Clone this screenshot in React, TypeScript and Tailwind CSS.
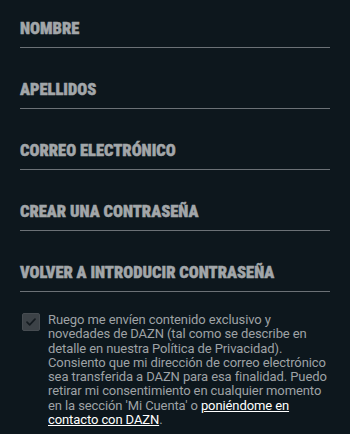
import React from "react";

const fields = [
  "NOMBRE",
  "APELLIDOS",
  "CORREO ELECTRÓNICO",
  "CREAR UNA CONTRASEÑA",
  "VOLVER A INTRODUCIR CONTRASEÑA",
];

function Field({ label, first }: { label: string; first?: boolean }) {
  return (
    <div
      className={
        "flex h-[48px] items-end border-b border-[#6b7176] pb-[10px] " +
        (first ? "" : "mt-[13px]")
      }
    >
      <span className="text-[16.5px] font-black leading-[16px] text-[#a2a6a9] [-webkit-text-stroke:0.45px_#a2a6a9] [font-stretch:condensed] [font-family:Roboto,sans-serif]">
        {label}
      </span>
    </div>
  );
}

export default function App() {
  return (
    <div className="min-h-[434px] w-[350px] bg-[#0d171d] px-5 [font-family:Roboto,sans-serif]">
      {fields.map((f, i) => (
        <Field key={f} label={f} first={i === 0} />
      ))}
      <div className="mt-[21px] flex gap-[8px] pl-[2px]">
        <div className="flex h-[18px] w-[18px] shrink-0 items-center justify-center rounded-[2px] border border-[#464c51] bg-[#3c4247]">
          <svg viewBox="0 0 18 18" className="h-[18px] w-[18px]" fill="none">
            <path
              d="M4.5 9.2l3 3 6-6.5"
              stroke="#141b20"
              strokeWidth="1.9"
              strokeLinecap="round"
              strokeLinejoin="round"
            />
          </svg>
        </div>
        <p className="text-[13px] leading-[14.3px] tracking-[-0.1px] text-[#9ea2a5]">
          Ruego me envíen contenido exclusivo y novedades de DAZN (tal como se
          describe en detalle en nuestra Política de Privacidad). Consiento que
          mi dirección de correo electrónico sea transferida a DAZN para esa
          finalidad. Puedo retirar mi consentimiento en cualquier momento en la
          sección 'Mi Cuenta' o{" "}
          <a className="text-white underline">poniéndome en contacto con DAZN</a>.
        </p>
      </div>
    </div>
  );
}
